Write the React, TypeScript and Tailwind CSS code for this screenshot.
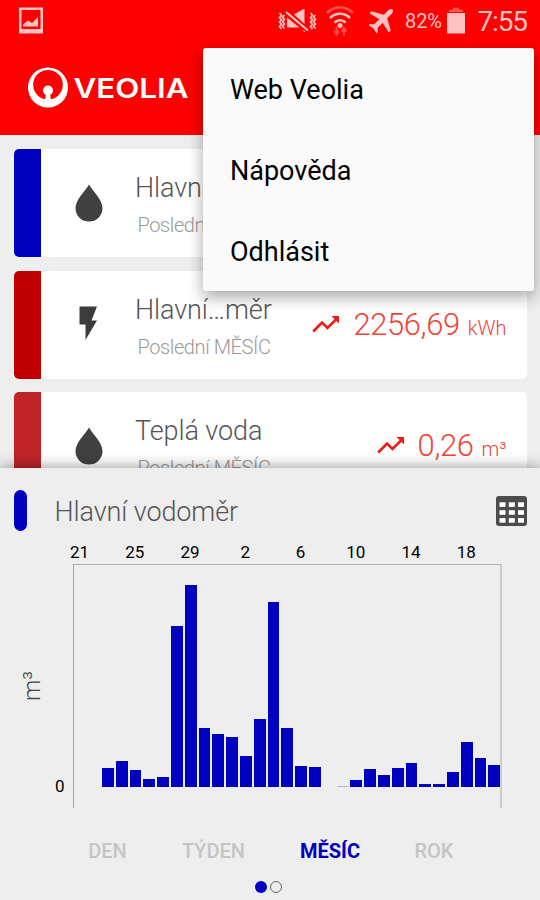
import { ReactNode } from "react";
import clsx from "clsx";

interface Meter {
  id: number;
  name: string;
  stripe: string;
  icon: "drop" | "bolt";
  value?: string;
  unit?: string;
}

const meters: Meter[] = [
  { id: 1, name: "Hlavní…měr", stripe: "bg-[#0000bf]", icon: "drop" },
  { id: 2, name: "Hlavní…měr", stripe: "bg-[#be0000]", icon: "bolt", value: "2256,69", unit: "kWh" },
  { id: 3, name: "Teplá voda", stripe: "bg-[#bf2528]", icon: "drop", value: "0,26", unit: "m³" },
];

const menuItems = ["Web Veolia", "Nápověda", "Odhlásit"];

const days = ["21", "25", "29", "2", "6", "10", "14", "18"];

const bars = [
  18.5, 25.5, 16.5, 7.5, 9.5, 160.5, 202, 58.5, 52.5, 50, 30.5, 67.5, 185, 59,
  21, 20, 0, 1, 6.5, 18, 12, 18.5, 23.5, 3, 3, 14.5, 44.5, 29, 22,
];

const periods = [
  { label: "DEN", className: "w-[75px]" },
  { label: "TÝDEN", className: "w-[137px]" },
  { label: "MĚSÍC", className: "w-[96px]" },
  { label: "ROK", className: "w-[112px]" },
];

function DropIcon() {
  return (
    <svg className="-mt-px" width="28" height="38" viewBox="0 0 28 38" fill="#414141">
      <path d="M14 .5C10.500 7 .5 15.500 .5 24.300a13.500 13.200 0 0 0 27 0C27.500 15.500 17.500 7 14 .5z" />
    </svg>
  );
}

function BoltIcon() {
  return (
    <svg className="-mt-[3px]" width="28" height="38" viewBox="0 0 28 38" fill="#3c3c3c">
      <path d="M4.500 2.500h17.500L16.500 16.500H22L10.500 36V20.500h-6z" />
    </svg>
  );
}

function TrendIcon() {
  return (
    <svg className="relative -top-px" width="28" height="19" viewBox="0 0 28 19" fill="none" stroke="#f21b10" strokeWidth="2.600">
      <path d="M1.200 16.500 10 7.500l5.500 5.500L24.500 4" />
      <path d="M19.500 1h7.500v7.500z" fill="#f21b10" stroke="none" />
    </svg>
  );
}

function StatusBar() {
  return (
    <div className="flex h-[42px] items-center pl-[19px] pr-[13px] text-[#ffc2c2]">
      <svg className="-mt-px" width="24" height="27" viewBox="0 0 24 27" fill="currentColor">
        <path fillRule="evenodd" d="M0 .5h24v26H0zM2.500 3v19h19V3z" />
        <path d="M4 19.500v-2l5-4 4 2.500 6-6v9.500z" />
      </svg>
      <svg className="ml-[235px]" width="39" height="25" viewBox="0 0 39 25" fill="none" stroke="currentColor" strokeWidth="1.700">
        <path d="M1.500 4l2 2.200-2 2.300 2 2.200-2 2.300 2 2.200-2 2.300 2 2.500M6.500 6l-2 2.200 2 2.300-2 2.300 2 2.200-2 2.300 2 2.200M32.500 4l2 2.200-2 2.300 2 2.200-2 2.300 2 2.200-2 2.300 2 2.500M37.500 6l-2 2.200 2 2.300-2 2.300 2 2.200-2 2.300 2 2.200" />
        <path d="M9 8.500l12.500 10H9zM16 5.500l10.500-6v15.500zM24 21l3 2.500V22z" fill="currentColor" stroke="none" />
        <path d="M8 3l22 18.500" strokeWidth="2.200" />
      </svg>
      <svg className="ml-[8px] -mt-px" width="30" height="31" viewBox="0 0 30 31" fill="none" stroke="currentColor" strokeWidth="2.600">
        <path d="M2 8a18 18 0 0 1 26 0" opacity=".4" />
        <path d="M5 13a14 14 0 0 1 20 0M9.500 17.500a8 8 0 0 1 11 0" />
        <circle cx="15" cy="20.500" r="2.500" fill="currentColor" stroke="none" />
        <path d="M11.500 22v7M9 26l2.500 3.500 2.500-3.500M19 30.500v-7M16.500 26.500l2.500-3.500 2.500 3.500" strokeWidth="2" opacity=".4" />
      </svg>
      <svg className="ml-[13px] -mt-px" width="26" height="26" viewBox="0 0 26 26" fill="currentColor">
        <path d="M24.500 1.500c-1.200-1-3.200-.3-4.500 1L15.800 6.700 3.500 3.200 1.500 5.200l9.800 6-5.300 5.300L2 16 .7 17.300l4.800 3.200 3 5L10 24l-.5-4 5.200-5.300 6 9.800 2-2-3.500-12.300L23.500 6c1.300-1.300 2-3.300 1-4.500z" />
      </svg>
      <span className="ml-[11px] w-[38px] whitespace-nowrap text-[20px] tracking-[-0.1px]">82%</span>
      <svg className="ml-[4px] -mt-[2px]" width="18" height="27" viewBox="0 0 18 27" fill="currentColor">
        <path d="M0 6h18v20.500H0z" />
        <path d="M2 2.500h4V.5h6v2h4V5H2z" opacity=".4" />
      </svg>
      <span className="ml-auto mt-[2px] text-[28px] leading-none tracking-[-1.100px]">7:55</span>
    </div>
  );
}

function Logo() {
  return (
    <svg className="ml-[27px]" width="163" height="42" viewBox="0 0 163 42" fill="#fff">
      <circle cx="21" cy="20.500" r="20" />
      <circle cx="21" cy="17.700" r="14.800" fill="#fe0000" />
      <circle cx="21" cy="23.500" r="5" />
      <path d="M19 26h4l1 8h-6z" />
      <text x="46.500" y="31" fontFamily="Inter, 'DejaVu Sans', sans-serif" fontWeight="600" fontSize="27" textLength="115" lengthAdjust="spacingAndGlyphs">
        VEOLIA
      </text>
    </svg>
  );
}

function MeterCard({ meter }: { meter: Meter }) {
  return (
    <div className="flex h-[108px] shrink-0 overflow-hidden rounded-[5px] bg-white">
      <div className={clsx("w-[27px] shrink-0", meter.stripe)} />
      <div className="flex w-[95px] shrink-0 items-center justify-center">
        {meter.icon === "drop" ? <DropIcon /> : <BoltIcon />}
      </div>
      <div className="pt-[22px] font-light">
        <div className="-ml-px whitespace-nowrap text-[27px] leading-[34px] tracking-[-0.1px] text-[#555]">{meter.name}</div>
        <div className="mt-[7px] whitespace-nowrap pl-[1.5px] text-[20px] leading-[26px] tracking-[-0.4px] text-[#999]">Poslední MĚSÍC</div>
      </div>
      {meter.value && (
        <div className="ml-auto flex items-baseline self-center pr-[20px] font-light text-[#f04438]">
          <TrendIcon />
          <span className="ml-[13px] text-[31px] leading-[40px] tracking-[-0.4px]">{meter.value}</span>
          <span className="ml-[8px] text-[20px]">{meter.unit}</span>
        </div>
      )}
    </div>
  );
}

function TableIcon() {
  const cols = [3.5, 12.8, 22];
  const rows = [6.3, 14.2, 22.1];
  return (
    <svg className="mt-[2px]" width="31" height="30" viewBox="0 0 31 30">
      <rect width="31" height="30" rx="3" fill="#4c4c4c" />
      {rows.map((y) =>
        cols.map((x) => <rect key={`${x}-${y}`} x={x} y={y} width="6" height="4.600" fill="#fff" />)
      )}
    </svg>
  );
}

function Chart() {
  return (
    <div>
      <div className="ml-[52px] flex h-[22px] w-[442px] text-[17px] leading-[21px] text-black">
        {days.map((day) => (
          <span key={day} className="flex-1 text-center">{day}</span>
        ))}
      </div>
      <div className="flex">
        <div className="flex w-[73px] items-start">
          <span className="mt-[107px] ml-[15px] flex h-[30px] w-[34px] -rotate-90 items-center justify-center text-[24px] font-light text-[#444]">m³</span>
          <span className="ml-[6px] mt-[211px] text-[17px] leading-[22px]">0</span>
        </div>
        <div className="flex h-[244px] w-[429px] items-end border-l-[1.5px] border-r-2 border-t-[1.5px] border-l-[#a5a5a5] border-r-[#ccc] border-t-[#b0b0b0]">
          <div className="mb-[21.5px] -mr-[2px] ml-auto flex w-[400px] items-end">
            {bars.map((height, index) => (
              <Bar key={index} height={height} />
            ))}
          </div>
        </div>
      </div>
    </div>
  );
}

function Bar({ height }: { height: number }) {
  return (
    <div className="flex-1 pr-[2px]">
      <div className={clsx("w-full", height > 1 ? "bg-[#0000bf]" : "bg-[#b4b4dc]")} style={{ height }} />
    </div>
  );
}

function Menu({ children }: { children: ReactNode }) {
  return (
    <div className="absolute left-[203px] top-[48px] z-20 h-[243px] w-[331px] rounded-[3px] bg-[#fafafa] pt-[2px] shadow-[0_6px_16px_rgba(0,0,0,0.35)]">
      {children}
    </div>
  );
}

export default function App() {
  return (
    <div className="relative flex h-[900px] w-[540px] flex-col overflow-hidden bg-[#eee] font-[Roboto,sans-serif]">
      <header className="h-[135px] shrink-0 bg-[#fe0000]">
        <StatusBar />
        <div className="pt-[25px]">
          <Logo />
        </div>
      </header>

      <main className="flex h-[333px] shrink-0 flex-col gap-[13.5px] overflow-hidden pl-[14px] pr-[13.5px] pt-[14px]">
        {meters.map((meter) => (
          <MeterCard key={meter.id} meter={meter} />
        ))}
      </main>

      <section className="relative z-10 flex-1 bg-[#eee] shadow-[0_0_14px_rgba(0,0,0,0.45)]">
        <div className="flex h-[74px] items-center pl-[14px] pr-[13px] pt-[10px]">
          <div className="h-[41px] w-[13px] rounded-full bg-[#0000bf]" />
          <h2 className="ml-[27.5px] mt-[4px] text-[27px] font-light tracking-[-0.1px] text-[#555]">Hlavní vodoměr</h2>
          <div className="ml-auto">
            <TableIcon />
          </div>
        </div>
        <Chart />
        <div className="mt-[29px] flex pl-[70px] text-[20px] font-medium leading-[28px] text-[#c5c5c5]">
          {periods.map((period) => (
            <button key={period.label} className={clsx("text-center", period.className, period.label === "MĚSÍC" && "font-bold text-[#0000bf]")}>
              {period.label}
            </button>
          ))}
        </div>
        <div className="mt-[16px] flex justify-center gap-[3px] pr-[4px]">
          <span className="h-3 w-3 rounded-full bg-[#0000bf]" />
          <span className="h-3 w-3 rounded-full border-[1.5px] border-[#666]" />
        </div>
      </section>

      <Menu>
        {menuItems.map((item) => (
          <button key={item} className="flex h-[81px] w-full items-center pl-[27px] text-[27px] text-black">
            {item}
          </button>
        ))}
      </Menu>
    </div>
  );
}
